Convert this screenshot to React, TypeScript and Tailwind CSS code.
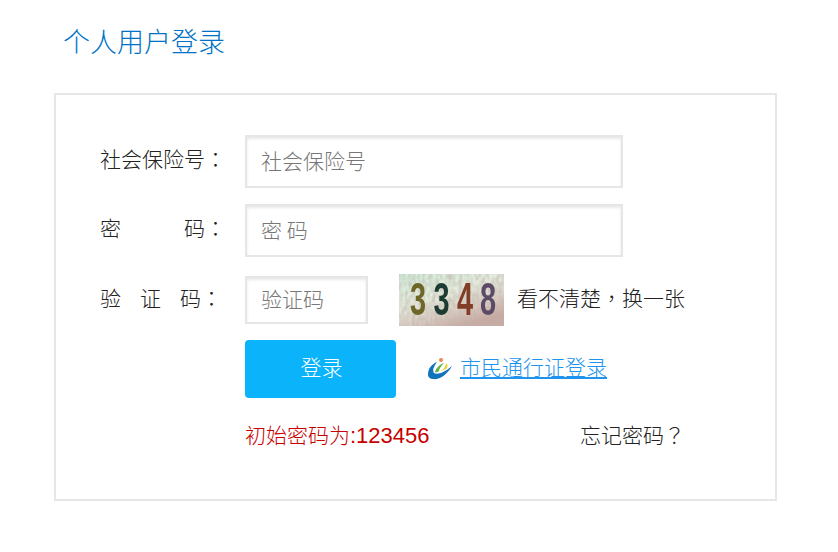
const punct = { fontFamily: '"Noto Sans CJK TC", sans-serif' };
const input = "border-2 border-[#e6e6e6] shadow-[inset_0_2px_3px_#e8e8e8] pl-[14px] text-[#777]";

export default function App() {
  const font = { fontFamily: '"Noto Sans CJK SC", "Liberation Sans", sans-serif' };
  return (
    <div style={font} className="w-[838px] h-[552px] bg-white overflow-hidden pt-[20px] pl-[54px] font-light">
      <h1 className="pl-[9px] h-[73px] text-[27px] leading-[42px] font-light text-[#0072c6]">个人用户登录</h1>
      <div className="w-[723px] h-[408px] border-2 border-[#e6e6e6] pt-[40px] pl-[44px] text-[#222] text-[21px]">
        <div className="flex h-[53px] mb-[16px]">
          <label className="w-[145px] leading-[46px] whitespace-pre">社会保险号<span style={punct}>：</span></label>
          <div className={`${input} w-[378px] h-[53px] leading-[47px]`}>社会保险号</div>
        </div>
        <div className="flex h-[53px] mb-[17px]">
          <label className="w-[145px] leading-[47px] whitespace-pre">密<span className="inline-block w-[63px]" />码<span style={punct}>：</span></label>
          <div className={`${input} w-[378px] h-[53px] leading-[47px]`}>密 码</div>
        </div>
        <div className="flex items-center h-[52px] mb-[14px]">
          <label className="self-start w-[145px] leading-[46px] whitespace-pre">验<span className="inline-block w-[19px]" />证<span className="inline-block w-[19px]" />码<span style={punct}>：</span></label>
          <div className={`${input} w-[123px] h-[48px] leading-[40px]`}>验证码</div>
          <svg className="ml-[31px] shrink-0" width="105" height="52" viewBox="0 0 105 52">
            <defs>
              <linearGradient id="bg" x1="0" y1="0" x2="0.6" y2="1">
                <stop offset="0" stopColor="#cfeeda" />
                <stop offset="0.45" stopColor="#e6eede" />
                <stop offset="0.75" stopColor="#dccfc4" />
                <stop offset="1" stopColor="#c9a9a0" />
              </linearGradient>
              <filter id="noise" x="0" y="0" width="100%" height="100%">
                <feTurbulence type="fractalNoise" baseFrequency="0.3 0.16" numOctaves="3" seed="4" />
                <feColorMatrix values="0 0 0 0 0.5  0 0 0 0 0.45  0 0 0 0 0.42  0.8 0.8 0 0 -0.55" />
              </filter>
              <filter id="soft"><feGaussianBlur stdDeviation="0.6" /></filter>
            </defs>
            <rect width="105" height="52" fill="url(#bg)" />
            <rect width="105" height="52" filter="url(#noise)" />
            <g filter="url(#soft)" fontFamily="Liberation Sans, sans-serif" fontWeight="700" fontSize="34" textAnchor="middle">
              <text transform="translate(19 41) scale(0.85 1.35)" fill="#6e6626">3</text>
              <text transform="translate(42.5 41) scale(0.85 1.35)" fill="#1a3a30">3</text>
              <text transform="translate(66 41) scale(0.85 1.35)" fill="#823e28">4</text>
              <text transform="translate(89 41) scale(0.85 1.35)" fill="#5c4c66">8</text>
            </g>
          </svg>
          <span className="ml-[13px] text-[21px] -translate-y-[2px]">看不清楚<span style={punct}>，</span>换一张</span>
        </div>
        <div className="flex items-center h-[58px] pl-[145px] mb-[16px]">
          <button className="w-[151px] h-[58px] rounded-[4px] bg-[#0ab3fa] text-white text-[21px] font-light pb-[4px] pl-[2px]">登录</button>
          <svg className="ml-[30px] w-[28px] h-[26px] -translate-y-[1px]" viewBox="0 0 28 26" fill="none" style={{ filter: 'blur(0.4px)' }}>
            <path d="M2 20C2 13 6 9 11 7C8 11 6 15 8 18C11 20 18 18 26 11C21 20 13 25 7 24C4 24 2 22 2 20Z" fill="#1273bd" />
            <path d="M9 17C10 13 14 9 18 8C15 11 13 14 13 16C12 17 10 18 9 17Z" fill="#62b446" />
            <path d="M15 16C18 14 20 11 20 8C22 10 22 12 20 14Z" fill="#e8d12f" />
            <circle cx="15" cy="5" r="2" fill="#ec8a4a" />
          </svg>
          <a className="ml-[6px] text-[21px] text-[#1f94ee] underline -translate-y-[2px]">市民通行证登录</a>
        </div>
        <div className="flex h-[42px] pl-[145px] leading-[40px] text-[21px]">
          <span className="w-[335px] text-[#c80000]">初始密码为<span className="text-[22px]" style={{ fontFamily: '"Liberation Sans", sans-serif' }}>:123456</span></span>
          <span>忘记密码<span style={punct}>？</span></span>
        </div>
      </div>
    </div>
  );
}
